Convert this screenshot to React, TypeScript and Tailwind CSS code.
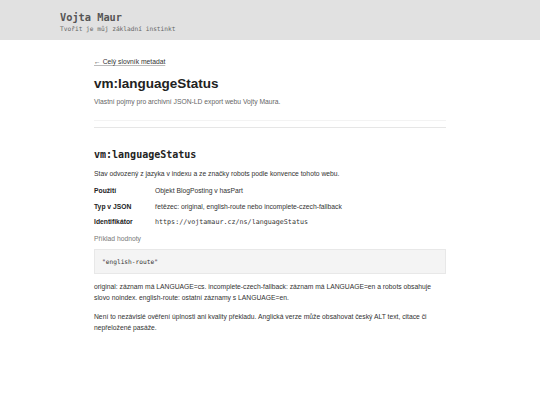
const sans = { fontFamily: '"Liberation Sans", Arial, sans-serif' };

const rows = [
    { label: 'Použití', value: 'Objekt BlogPosting v hasPart', mono: false },
    { label: 'Typ v JSON', value: 'řetězec: original, english-route nebo incomplete-czech-fallback', mono: false },
    { label: 'Identifikátor', value: 'https://vojtamaur.cz/ns/languageStatus', mono: true },
];

export default function App() {
    return (
        <div className="min-h-[405px] bg-white font-['Liberation_Sans',Arial,sans-serif]">
            {/* Header */}
            <header className="h-[40px] bg-[#e1e1e1] px-[60px] pt-[11px] font-['DejaVu_Sans_Mono',monospace]">
                <div className="text-[10.3px] leading-[12px] font-bold text-[#555]">Vojta Maur</div>
                <div className="text-[6.2px] leading-[8px] text-[#666] mt-[2px]">Tvořit je můj základní instinkt</div>
            </header>

            <main className="w-[352px] mx-auto" style={sans}>
                <a href="#" className="block mt-[17px] text-[6.75px] leading-[10px] text-[#333] underline decoration-[#bbb]">
                    ← Celý slovník metadat
                </a>
                <h1 className="mt-[9px] text-[13.5px] leading-[16px] font-bold text-[#222]">vm:languageStatus</h1>
                <p className="mt-[5px] text-[6.75px] leading-[10px] text-[#666]">
                    Vlastní pojmy pro archivní JSON-LD export webu Vojty Maura.
                </p>
                <div className="mt-[13px] border-t border-[#f3f3f3]" />
                <div className="mt-[6px] border-t border-[#e6e6e6]" />

                <section>
                    <h2 className="mt-[21px] font-['DejaVu_Sans_Mono',monospace] text-[10px] leading-[12px] font-bold text-[#222]">
                        vm:languageStatus
                    </h2>
                    <p className="mt-[8px] text-[6.75px] leading-[10px] text-[#333]">
                        Stav odvozený z jazyka v indexu a ze značky robots podle konvence tohoto webu.
                    </p>
                    <dl className="mt-[7px] flex flex-col gap-[5.5px]">
                        {rows.map((r) => (
                            <div key={r.label} className="flex text-[6.75px] leading-[10px] text-[#333]">
                                <dt className="w-[61px] shrink-0 font-bold text-[#222]">{r.label}</dt>
                                <dd className={r.mono ? "font-['DejaVu_Sans_Mono',monospace] text-[6.7px]" : ''}>{r.value}</dd>
                            </div>
                        ))}
                    </dl>
                    <p className="mt-[7px] text-[6.75px] leading-[10px] text-[#777]">Příklad hodnoty</p>
                    <pre className="mt-[5px] h-[25px] flex items-center px-[7px] bg-[#f4f4f4] border border-[#e8e8e8] font-['DejaVu_Sans_Mono',monospace] text-[6.2px] text-[#333]">
                        "english-route"
                    </pre>
                    <p className="mt-[7px] text-[6.75px] leading-[11px] text-[#333]">
                        original: záznam má LANGUAGE=cs. incomplete-czech-fallback: záznam má LANGUAGE=en a robots obsahuje slovo noindex. english-route: ostatní záznamy s LANGUAGE=en.
                    </p>
                    <p className="mt-[8px] text-[6.75px] leading-[11px] text-[#333]">
                        Není to nezávislé ověření úplnosti ani kvality překladu. Anglická verze může obsahovat český ALT text, citace či nepřeložené pasáže.
                    </p>
                </section>
            </main>
        </div>
    );
}
